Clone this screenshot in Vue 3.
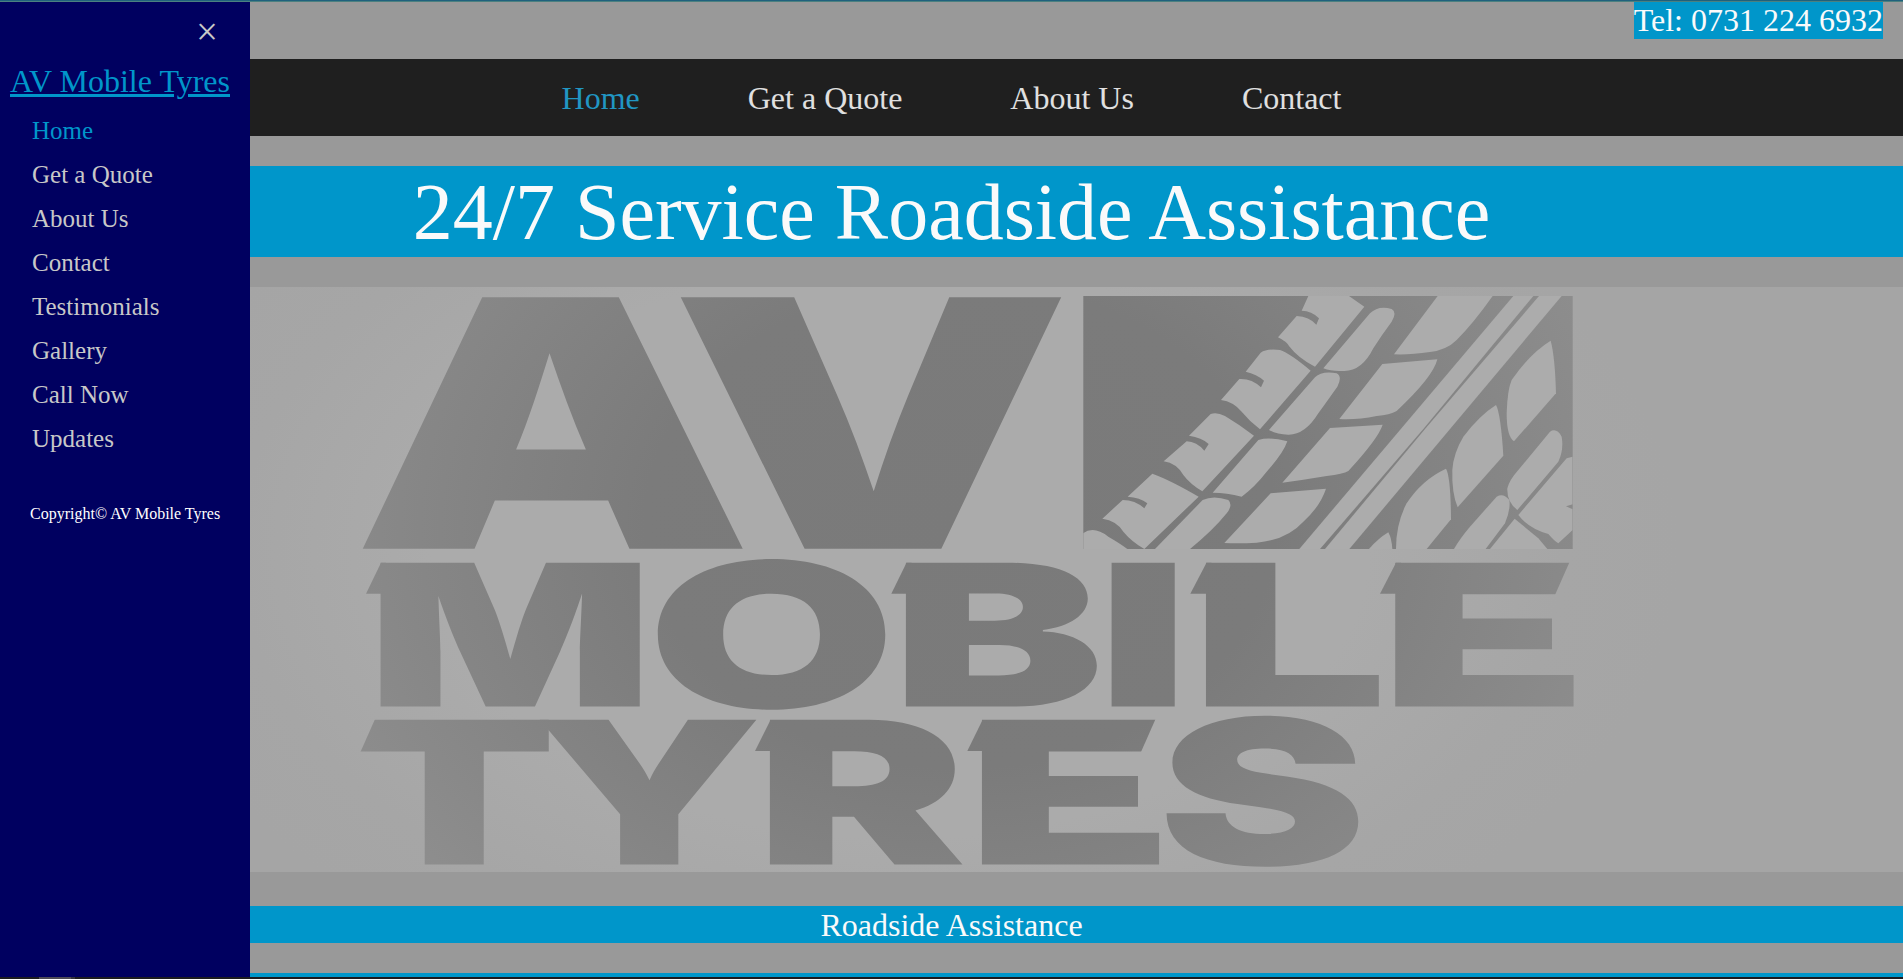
<script setup>
const sideLinks = ['Home', 'Get a Quote', 'About Us', 'Contact', 'Testimonials', 'Gallery', 'Call Now', 'Updates']
const navLinks = ['Home', 'Get a Quote', 'About Us', 'Contact']

// Each logo letter is stretched to fill its box: [letter, left, top, right, bottom]
const boxes = [
  ['A', 361.5, 296.5, 744, 548.8],
  ['V', 679.5, 296.5, 1062.5, 548.8],
  ['M', 380, 562.2, 640, 706.5],
  ['O', 656.5, 559.5, 886.5, 709.8],
  ['B', 905.3, 562.2, 1097, 706.5],
  ['I', 1111, 562.2, 1175, 706.5],
  ['L', 1205.3, 562.2, 1379.5, 706.5],
  ['E', 1394.6, 562.2, 1575.5, 706.5],
  ['T', 359, 719.3, 549, 864.5],
  ['Y', 539, 719.3, 757, 864.5],
  ['R', 769.3, 719.3, 964, 864.5],
  ['E', 981.3, 719.3, 1161, 864.5],
  ['S', 1165.5, 716.2, 1359, 867]
]
const ctx = document.createElement('canvas').getContext('2d')
ctx.font = '900 200px Inter, "Liberation Sans", sans-serif'
const letters = boxes.map(([ch, l, t, r, b]) => {
  const m = ctx.measureText(ch)
  const sx = (r - l) / (m.actualBoundingBoxLeft + m.actualBoundingBoxRight)
  const sy = (b - t) / (m.actualBoundingBoxAscent + m.actualBoundingBoxDescent)
  const tx = l + m.actualBoundingBoxLeft * sx
  const ty = t + m.actualBoundingBoxAscent * sy
  return {
    ch,
    transform: `matrix(${sx} 0 0 ${sy} ${tx} ${ty})`,
    // keeps the shading continuous from letter to letter
    shade: `translate(${(960 - tx) / sx} ${(525 - ty) / sy}) scale(${700 / sx} ${540 / sy})`
  }
})

// Slanted spurs beside the stems: [tip x, stem x, top y]
const spurs = [
  [366, 381, 562.7], [891.3, 906.5, 562.7], [1190.3, 1206.5, 562.7], [1380, 1396, 562.7],
  [755, 770.5, 720], [967.3, 982.5, 720]
]

// Bevels and notches taken off the arms
const cuts = [
  '1570,561 1578,561 1578,595 1555,595',
  '1552,617 1578,617 1578,654 1552,654',
  '1156,718 1163,718 1163,752 1141,752',
  '1138,775 1163,775 1163,811 1138,811',
  '357,718 375.5,718 360,753 357,753'
]

// Tyre tread blocks, drawn at three units per pixel
const tread = [
  'M715 48L695 92Q725 92 747 115L739 134Q718 110 680 108L624 172Q650 185 657 198Q685 235 735 260L883 80L837 48Z',
  'M527 275L572 218Q590 205 630 210Q660 220 722 272L570 448Q540 425 515 395Q490 365 453 360L508 297Q545 295 573 322L582 302Q560 282 527 275Z',
  'M357 467L422 402Q440 395 465 408Q510 435 552 467L397 634Q360 612 340 585Q320 550 281 544L350 484Q380 485 403 512L416 492Q395 472 357 467Z',
  'M173 650L247 581Q300 600 386 650L223 807Q185 785 160 755Q140 722 97 716L158 660Q195 660 223 685L232 670Q210 652 173 650Z',
  'M36 762Q70 735 115 770Q150 790 172 807L36 807Z',
  'M760 265L900 100Q925 75 965 87Q982 97 965 125Q935 165 910 205Q875 275 820 273Q785 275 760 265Z',
  'M597 450L735 292Q755 272 800 280Q818 290 802 320Q770 365 745 400Q705 465 655 464Q620 464 597 450Z',
  'M428 638L565 480Q600 470 652 484Q640 520 590 575Q555 620 515 650Q470 638 428 638Z',
  'M255 807L398 660Q430 645 475 660Q490 675 470 700Q430 750 360 807Z',
  'M1103 48L1268 48Q1210 130 1160 180Q1130 210 1080 216Q1020 225 972 223Z',
  'M937 252L1102 238Q1090 290 980 393Q960 405 920 408Q860 420 808 417Z',
  'M780 444L938 434Q925 475 835 573Q820 582 770 588Q700 600 637 608Z',
  'M602 640L768 626Q750 680 700 725Q650 780 560 788Q510 791 463 789Z',
  'M1330 48L1390 48L1062 445L750 807L688 807Z',
  'M1407 48L1475 48L838 807L765 807L1067 445Z',
  'M1442 182Q1455 230 1458 340L1332 484Q1310 470 1310 400Q1312 330 1325 300Q1380 220 1442 182Z',
  'M1278 375Q1292 400 1300 527L1163 682Q1145 640 1147 570Q1150 520 1180 470Q1230 405 1278 375Z',
  'M1128 566Q1142 590 1143 718L1070 807L978 807Q978 730 1010 670Q1055 600 1128 566Z',
  'M955 757Q965 775 967 807L897 807Q925 775 955 757Z',
  'M1440 455Q1460 442 1475 470Q1482 510 1465 545L1342 690Q1310 665 1312 625Q1318 600 1345 570Z',
  'M1280 650Q1300 638 1318 660Q1322 690 1305 730L1247 807L1152 807Q1170 775 1200 740Z',
  'M1334 716L1405 775L1432 807L1260 807Z',
  'M1508 530L1490 535L1345 705Q1375 745 1435 762Q1455 785 1465 790L1508 750L1508 688L1488 679L1508 673Z'
]
</script>

<template>
  <div class="page">
    <main class="content">
      <a class="tel">Tel: 0731 224 6932</a>
      <nav class="topnav">
        <a v-for="(item, i) in navLinks" :key="item" :class="{ active: i === 0 }">{{ item }}</a>
      </nav>
      <h1 class="banner">24/7 Service Roadside Assistance</h1>
      <svg class="hero" viewBox="0 287 1903 585" width="1903" height="585">
        <defs>
          <radialGradient id="ink" gradientUnits="userSpaceOnUse" cx="0" cy="0" r="1" gradientTransform="translate(960 525) scale(700 540)">
            <stop offset="0" stop-color="#7a7a7a" />
            <stop offset="0.45" stop-color="#7b7b7b" />
            <stop offset="0.8" stop-color="#878787" />
            <stop offset="1" stop-color="#8e8e8e" />
          </radialGradient>
          <radialGradient
            v-for="(g, i) in letters" :id="`ink${i}`" :key="i" href="#ink"
            gradientUnits="userSpaceOnUse" cx="0" cy="0" r="1" :gradientTransform="g.shade"
          />
          <radialGradient id="paper" gradientUnits="userSpaceOnUse" cx="0" cy="0" r="1" gradientTransform="translate(900 550) scale(780 480)">
            <stop offset="0" stop-color="#ababab" />
            <stop offset="0.6" stop-color="#ababab" />
            <stop offset="0.85" stop-color="#a6a6a6" />
            <stop offset="1" stop-color="#a5a5a5" />
          </radialGradient>
          <clipPath id="tile"><rect x="40" y="48" width="1468" height="759" /></clipPath>
        </defs>
        <rect x="0" y="287" width="1903" height="585" fill="url(#paper)" />
        <rect x="1083.3" y="296" width="489.4" height="253" fill="url(#ink)" />
        <g transform="translate(1070 280) scale(0.33333)">
          <g clip-path="url(#tile)">
            <path v-for="d in tread" :key="d" :d="d" fill="#acacac" />
          </g>
        </g>
        <text
          v-for="(g, i) in letters" :key="i" class="glyph"
          :transform="g.transform" :fill="`url(#ink${i})`"
        >{{ g.ch }}</text>
        <g fill="url(#ink)">
          <polygon
            v-for="s in spurs" :key="s.join()"
            :points="`${s[1]},${s[2]} ${s[0]},${s[2] + 31} ${s[1] + 5},${s[2] + 31} ${s[1] + 5},${s[2]}`"
          />
        </g>
        <g fill="url(#paper)">
          <polygon v-for="c in cuts" :key="c" :points="c" />
        </g>
      </svg>
      <h2 class="strip">Roadside Assistance</h2>
      <div class="strip next"></div>
    </main>

    <aside class="sidebar">
      <div class="close">×</div>
      <a class="brand">AV Mobile Tyres</a>
      <ul>
        <li v-for="(item, i) in sideLinks" :key="item" :class="{ active: i === 0 }">{{ item }}</li>
      </ul>
      <p>Copyright© AV Mobile Tyres</p>
    </aside>
    <div class="edge-top"></div>
    <div class="edge-bottom"><span></span></div>
  </div>
</template>

<style>
body { margin: 0; overflow: hidden; background: #999; }
</style>

<style scoped>
.page {
  position: relative;
  width: 1903px;
  height: 979px;
  overflow: hidden;
  background: #999;
  font-family: "Liberation Serif", "Times New Roman", serif;
}
.content { display: flex; flex-direction: column; padding-top: 2px; }
.tel {
  align-self: flex-end;
  margin: 0 20px 20px 0;
  height: 37px;
  line-height: 37px;
  font-size: 32px;
  background: #0096ca;
  color: #fafafa;
}
.topnav {
  display: flex;
  justify-content: center;
  gap: 108px;
  height: 77px;
  line-height: 79px;
  background: #1f1f1f;
  font-size: 32px;
  color: #e0e0e0;
}
.topnav .active { color: #2196c3; }
.banner {
  margin: 30px 0;
  height: 91px;
  line-height: 93px;
  text-align: center;
  font-size: 80px;
  font-weight: 400;
  background: #0096ca;
  color: #fafafa;
}
.hero { display: block; overflow: visible; }
.glyph { font: 900 200px Inter, "Liberation Sans", sans-serif; }
.strip {
  margin: 34px 0 30px;
  height: 37px;
  line-height: 39px;
  text-align: center;
  font-size: 32px;
  font-weight: 400;
  background: #0096ca;
  color: #fafafa;
}
.next { margin: 0; }
.sidebar {
  position: absolute;
  left: 0;
  top: 0;
  box-sizing: border-box;
  width: 250px;
  height: 979px;
  background: #000060;
  color: #c8c8c8;
}
.close {
  box-sizing: border-box;
  height: 63px;
  padding: 10px 32px 0 0;
  text-align: right;
  font-size: 39px;
  line-height: 44px;
}
.brand {
  display: block;
  padding-left: 10px;
  height: 46px;
  line-height: 37px;
  font-size: 32px;
  color: #0096ca;
  white-space: nowrap;
  text-decoration: underline;
  text-decoration-thickness: 3px;
}
.sidebar ul { list-style: none; margin: 0; padding: 0 0 0 32px; }
.sidebar li { height: 44px; line-height: 44px; font-size: 25px; }
.sidebar .active { color: #0096ca; }
.sidebar p { margin: 44px 0 0 30px; font-size: 16px; line-height: 18px; color: #fff; white-space: nowrap; }
.edge-top {
  position: absolute;
  left: 0;
  top: 0;
  width: 100%;
  height: 1px;
  background: #1f617d;
  border-bottom: 1px solid #4b8080;
}
.edge-bottom { position: absolute; left: 0; bottom: 0; width: 100%; height: 2px; background: #1c1c20; }
.edge-bottom span { display: block; width: 32px; height: 2px; margin-left: 39px; background: #4c4a55; border-right: 4px solid #34333c; }
</style>
